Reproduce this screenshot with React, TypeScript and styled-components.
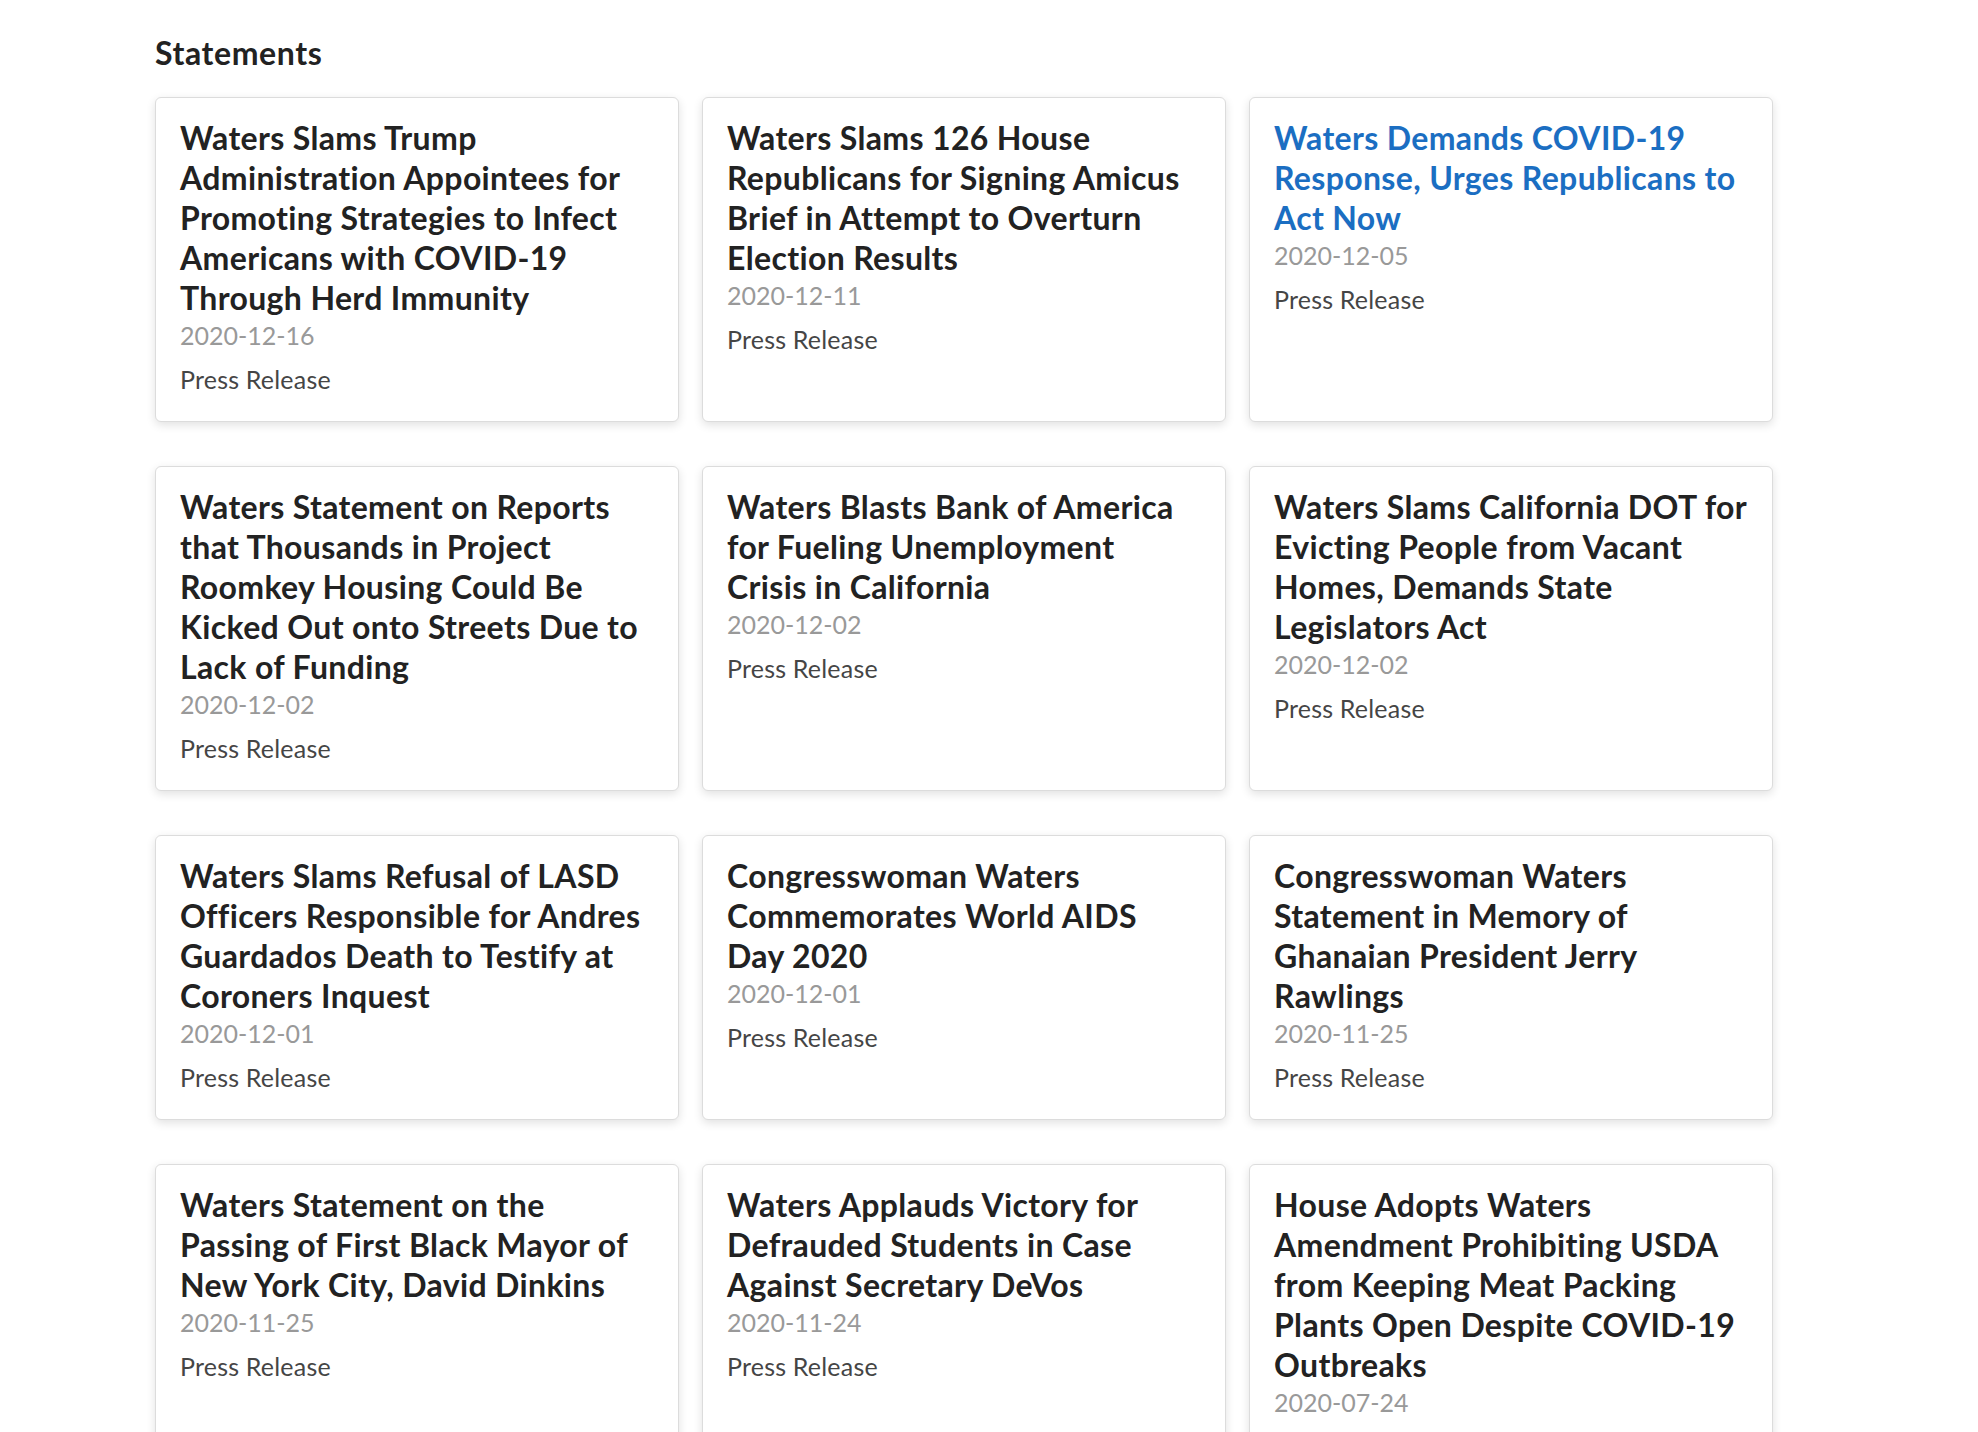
import { createGlobalStyle } from "styled-components";
import styled from "styled-components";

const GlobalStyle = createGlobalStyle`
  body {
    margin: 0;
    background-color: #ffffff;
    font-family: Lato, "Open Sans", Arial, sans-serif;
    color: #222222;
  }
`;

const Container = styled.div`
  padding: 33px 0 0 155px;
  width: 1618px;
`;

const Heading = styled.h2`
  margin: 0 0 24px 0;
  font-size: 32px;
  line-height: 40px;
  font-weight: 700;
  letter-spacing: 0.6px;
  color: #222222;
`;

const CardGrid = styled.div`
  display: grid;
  grid-template-columns: repeat(3, 524px);
  column-gap: 23px;
  row-gap: 44px;
`;

const Card = styled.div`
  display: flex;
  flex-direction: column;
  padding: 20px 24px 26px 24px;
  background-color: #ffffff;
  border: 1px solid #dcdcdc;
  border-radius: 6px;
  box-shadow: 0 3px 10px rgba(0, 0, 0, 0.12);
`;

const Title = styled.a<{ $active?: boolean }>`
  display: block;
  font-size: 32px;
  line-height: 40px;
  font-weight: 700;
  letter-spacing: 0.35px;
  text-decoration: none;
  color: ${(p) => (p.$active ? "#1b6ec2" : "#222222")};
  cursor: pointer;
`;

const DateText = styled.div`
  font-size: 25px;
  line-height: 34px;
  color: #999999;
`;

const Category = styled.div`
  margin-top: 12px;
  font-size: 25px;
  line-height: 31px;
  letter-spacing: 0.2px;
  color: #454545;
`;

interface statement__interface {
  title: string;
  date: string;
  active?: boolean;
}

const statements: statement__interface[] = [
  {
    title:
      "Waters Slams Trump Administration Appointees for Promoting Strategies to Infect Americans with COVID-19 Through Herd Immunity",
    date: "2020-12-16",
  },
  {
    title:
      "Waters Slams 126 House Republicans for Signing Amicus Brief in Attempt to Overturn Election Results",
    date: "2020-12-11",
  },
  {
    title: "Waters Demands COVID-19 Response, Urges Republicans to Act Now",
    date: "2020-12-05",
    active: true,
  },
  {
    title:
      "Waters Statement on Reports that Thousands in Project Roomkey Housing Could Be Kicked Out onto Streets Due to Lack of Funding",
    date: "2020-12-02",
  },
  {
    title:
      "Waters Blasts Bank of America for Fueling Unemployment Crisis in California",
    date: "2020-12-02",
  },
  {
    title:
      "Waters Slams California DOT for Evicting People from Vacant Homes, Demands State Legislators Act",
    date: "2020-12-02",
  },
  {
    title:
      "Waters Slams Refusal of LASD Officers Responsible for Andres Guardados Death to Testify at Coroners Inquest",
    date: "2020-12-01",
  },
  {
    title: "Congresswoman Waters Commemorates World AIDS Day 2020",
    date: "2020-12-01",
  },
  {
    title:
      "Congresswoman Waters Statement in Memory of Ghanaian President Jerry Rawlings",
    date: "2020-11-25",
  },
  {
    title:
      "Waters Statement on the Passing of First Black Mayor of New York City, David Dinkins",
    date: "2020-11-25",
  },
  {
    title:
      "Waters Applauds Victory for Defrauded Students in Case Against Secretary DeVos",
    date: "2020-11-24",
  },
  {
    title:
      "House Adopts Waters Amendment Prohibiting USDA from Keeping Meat Packing Plants Open Despite COVID-19 Outbreaks",
    date: "2020-07-24",
  },
];

function App() {
  return (
    <>
      <GlobalStyle />
      <Container>
        <Heading>Statements</Heading>
        <CardGrid>
          {statements.map((item) => (
            <Card key={item.title}>
              <Title $active={item.active}>{item.title}</Title>
              <DateText>{item.date}</DateText>
              <Category>Press Release</Category>
            </Card>
          ))}
        </CardGrid>
      </Container>
    </>
  );
}

export default App;
